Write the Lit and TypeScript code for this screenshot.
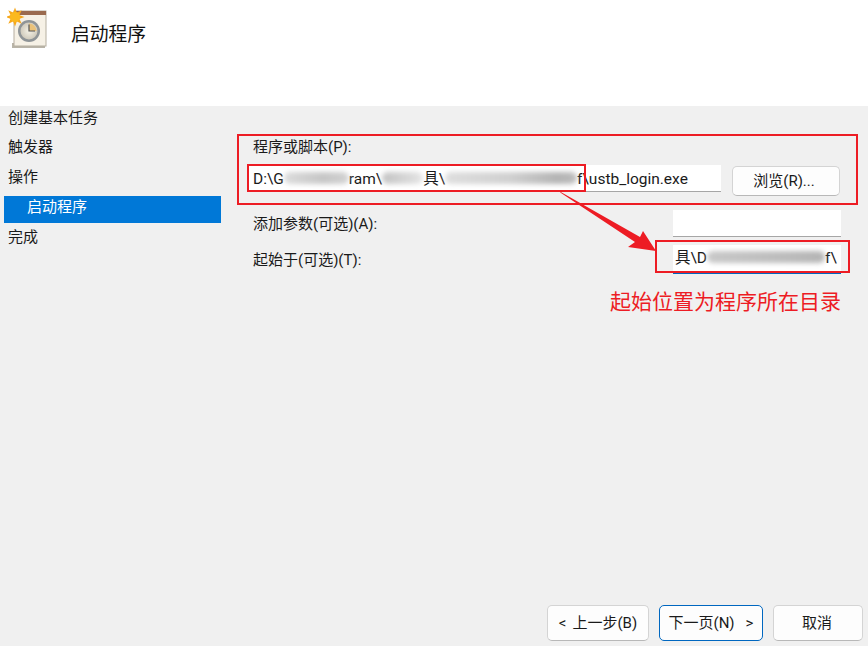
import { LitElement, html, css, svg } from "lit";
import { customElement } from "lit/decorators.js";

const sunRays = [0, 45, 90, 135, 180, 225, 270, 315];

@customElement("app-root")
export class AppRoot extends LitElement {
  static styles = css`
    :host {
      display: block;
      width: 868px;
      height: 646px;
      position: relative;
      overflow: hidden;
      background: #f0f0f0;
      color: #1a1a1a;
      font-family: "Roboto", "Noto Sans CJK SC", sans-serif;
      font-size: 15px;
    }
    .page { display: flex; flex-direction: column; height: 100%; }
    .header {
      height: 106px;
      flex: none;
      background: #fff;
      display: flex;
      align-items: flex-start;
      padding: 7px 0 0 7px;
      box-sizing: border-box;
    }
    .header svg { display: block; flex: none; }
    .title { margin: 15px 0 0 22px; font-size: 18.8px; line-height: 27px; color: #111; }
    .main { flex: 1; display: flex; min-height: 0; }
    .side { width: 222px; flex: none; display: flex; flex-direction: column; gap: 8px; }
    .step { height: 22px; line-height: 22px; padding-left: 8px; white-space: nowrap; }
    .step:first-child { line-height: 24px; }
    .step.active {
      height: 27px;
      margin: 0 1px -5px 4px;
      padding-left: 23px;
      background: #0078d7;
      color: #fff;
      line-height: 22px;
    }
    .form { flex: 1; padding: 31px 27px 0 26px; display: flex; flex-direction: column; }
    .label { padding-left: 5px; line-height: 20px; white-space: nowrap; }
    .row { display: flex; align-items: flex-start; }
    .r1 { margin-top: 8px; gap: 11px; }
    .r2 { margin-top: 14px; justify-content: space-between; align-items: center; }
    .r3 { margin-top: 8px; justify-content: space-between; align-items: center; }
    .input {
      background: #fff;
      border-bottom: 1px solid #a6a6a6;
      box-sizing: border-box;
      height: 27px;
      line-height: 28px;
      white-space: nowrap;
      overflow: hidden;
      flex: none;
      display: flex;
      font-size: 15.5px;
    }
    .path { width: 473px; padding-left: 5px; }
    .short { width: 168px; }
    .focus { height: 29px; border-bottom: 2px solid #0067c0; padding-left: 2px; line-height: 27px; }
    .blur { flex: none; height: 12px; margin-top: 7px; filter: blur(2.5px); border-radius: 6px; }
    .focus .blur { margin-top: 6px; }
    .b1 { width: 65px; background: linear-gradient(90deg, #dcdcdc, #c6c6c6 60%, #d2d2d2); }
    .b2 { width: 41px; background: linear-gradient(90deg, #c4c4c4, #dadada 70%, #e6e6e6); }
    .b3 { width: 132px; background: linear-gradient(90deg, #dedede, #d0d0d0 50%, #b4b4b4 85%, #bcbcbc); }
    .b4 { width: 118px; background: linear-gradient(90deg, #c8c8c8, #bdbdbd 60%, #b4b4b4); }
    button {
      font: inherit;
      color: #1a1a1a;
      background: #fdfdfd;
      border: 1px solid #d4d4d4;
      border-bottom-color: #b8b8b8;
      border-radius: 5px;
      padding: 0 0 3px;
      flex: none;
      white-space: nowrap;
    }
    .browse { width: 108px; height: 30px; margin-top: 1px; padding: 0 4px 3px 0; }
    .footer { flex: none; display: flex; justify-content: flex-end; gap: 10px; padding: 0 5px 5px 0; }
    .footer button { height: 36px; }
    .gap { display: inline-block; width: 6px; }
    .gap.wide { width: 11px; }
    .back { width: 102px; }
    .next { width: 104px; border: 1.5px solid #0067c0; }
    .cancel { width: 90px; padding-right: 2px; }
    .overlay { position: absolute; inset: 0; width: 868px; height: 646px; pointer-events: none; }
    .note {
      position: absolute;
      left: 610px;
      top: 287px;
      font-size: 21px;
      line-height: 30px;
      color: #ed1c24;
      white-space: nowrap;
    }
  `;

  private icon() {
    return html`<svg width="42" height="42" viewBox="0 0 42 42">
      <defs>
        <radialGradient id="face" cx="0.5" cy="0.5" r="0.6">
          <stop offset="0" stop-color="#f4f1e6"></stop>
          <stop offset="1" stop-color="#c9c3b4"></stop>
        </radialGradient>
      </defs>
      <rect x="5" y="36" width="33" height="5" fill="#b9b4a8"></rect>
      <rect x="7" y="4" width="32" height="35" fill="#f6f1e6" stroke="#b5aea0" stroke-width="1"></rect>
      <rect x="7" y="4" width="32" height="4" fill="#9a6a4f"></rect>
      <circle cx="22" cy="24" r="11" fill="#8f9497"></circle>
      <circle cx="22" cy="24" r="8.5" fill="url(#face)"></circle>
      <path d="M22 24V16.5A7.5 7.5 0 0 1 29.5 24Z" fill="#eac27a"></path>
      <path d="M22 17.5V24H28" fill="none" stroke="#555" stroke-width="1.2"></path>
      ${sunRays.map(
        (a) => svg`<path d="M8 0.5L10 6H6Z" fill="#f7a81b" transform="rotate(${a} 8 10)"></path>`
      )}
      <circle cx="8" cy="10" r="5" fill="#fbb91f"></circle>
    </svg>`;
  }

  render() {
    return html`
      <div class="page">
        <div class="header">
          ${this.icon()}
          <div class="title">启动程序</div>
        </div>
        <div class="main">
          <div class="side">
            <div class="step">创建基本任务</div>
            <div class="step">触发器</div>
            <div class="step">操作</div>
            <div class="step active">启动程序</div>
            <div class="step">完成</div>
          </div>
          <div class="form">
            <div class="label">程序或脚本(P):</div>
            <div class="row r1">
              <div class="input path">
                <span>D:\\G</span><span class="blur b1"></span><span>ram\\</span><span class="blur b2"></span><span>具\\</span><span class="blur b3"></span><span>f\\ustb_login.exe</span>
              </div>
              <button class="browse">浏览(R)...</button>
            </div>
            <div class="row r2">
              <div class="label">添加参数(可选)(A):</div>
              <div class="input short"></div>
            </div>
            <div class="row r3">
              <div class="label">起始于(可选)(T):</div>
              <div class="input short focus">
                <span>具\\D</span><span class="blur b4"></span><span>f\\</span>
              </div>
            </div>
          </div>
        </div>
        <div class="footer">
          <button class="back">&lt;<span class="gap"></span>上一步(B)</button>
          <button class="next">下一页(N)<span class="gap wide"></span>&gt;</button>
          <button class="cancel">取消</button>
        </div>
      </div>
      <svg class="overlay" viewBox="0 0 868 646" fill="none" stroke="#ed1c24" stroke-width="2">
        <rect x="238" y="135" width="619" height="69"></rect>
        <rect x="248" y="165" width="337" height="26"></rect>
        <rect x="656" y="241" width="193" height="31"></rect>
        <path d="M559 191L640 237L643 231L656 251L628 247L635 242L561 193Z" fill="#ed1c24" stroke="none"></path>
      </svg>
      <div class="note">起始位置为程序所在目录</div>
    `;
  }
}
